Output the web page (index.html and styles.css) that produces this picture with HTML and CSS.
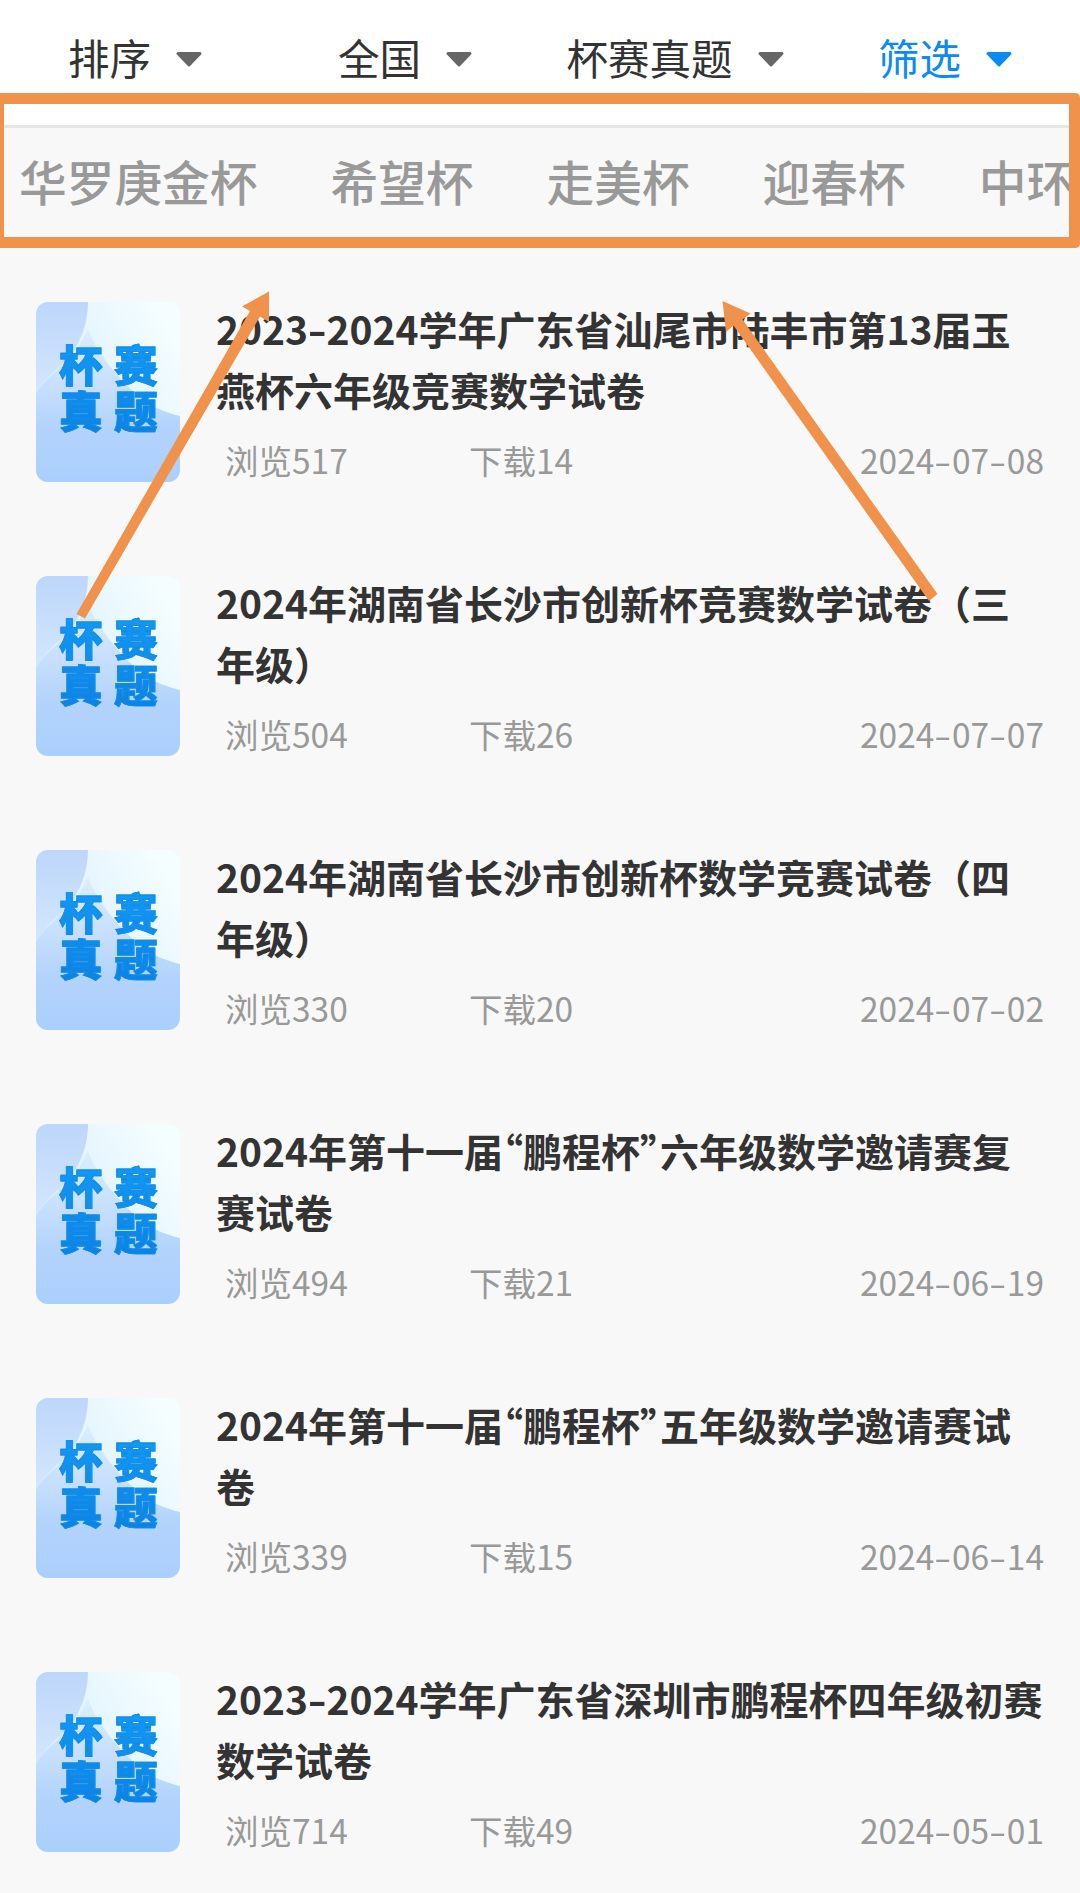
FILE: index.html
```html
<!DOCTYPE html>
<html lang="zh-CN">
<head>
  <meta charset="UTF-8">
  <title>杯赛真题</title>
  <link rel="stylesheet" href="styles.css">
</head>
<body>
  <svg class="defs" width="0" height="0">
    <defs>
      <linearGradient id="sky" x1="0" y1="0.6" x2="0.8" y2="0">
        <stop offset="0" stop-color="#cbe4fd"/>
        <stop offset="0.5" stop-color="#e4f5fe"/>
        <stop offset="1" stop-color="#f4fdff"/>
      </linearGradient>
      <linearGradient id="corner" x1="0" y1="0" x2="0" y2="1">
        <stop offset="0" stop-color="#bdd6fa"/>
        <stop offset="1" stop-color="#d3e7fd"/>
      </linearGradient>
      <linearGradient id="hill" x1="0" y1="0" x2="0" y2="1">
        <stop offset="0" stop-color="#dceefe"/>
        <stop offset="0.35" stop-color="#c8e0fd"/>
        <stop offset="0.65" stop-color="#b2d3fc"/>
        <stop offset="1" stop-color="#abcffd"/>
      </linearGradient>
    </defs>
    <symbol id="cover" viewBox="0 0 144 180">
      <rect width="144" height="180" fill="url(#sky)"/>
      <path d="M0 0H52C52 18 47 32 40 45C30 64 12 68 0 92Z" fill="url(#corner)"/>
      <path d="M0 92C12 72 34 62 42 46L52 27C60 50 82 76 100 92C112 104 128 110 144 114V180H0Z" fill="url(#hill)"/>
    </symbol>
    <symbol id="caret" viewBox="0 0 26 15">
      <path d="M2 1.5H24L13 13Z" fill="currentColor" stroke="currentColor" stroke-width="3" stroke-linejoin="round"/>
    </symbol>
  </svg>

  <div class="page">
    <nav class="filters">
      <div class="filter"><span>排序</span><svg><use href="#caret"/></svg></div>
      <div class="filter"><span>全国</span><svg><use href="#caret"/></svg></div>
      <div class="filter"><span>杯赛真题</span><svg><use href="#caret"/></svg></div>
      <div class="filter active"><span>筛选</span><svg><use href="#caret"/></svg></div>
    </nav>

    <div class="tabs">
      <span>华罗庚金杯</span>
      <span>希望杯</span>
      <span>走美杯</span>
      <span>迎春杯</span>
      <span>中环</span>
    </div>

    <ul class="list">
      <li class="item">
        <div class="thumb"><svg><use href="#cover"/></svg><p>杯赛<br>真题</p></div>
        <div class="info">
          <h3>2023<i>-</i>2024学年广东省汕尾市陆丰市第13届玉<br>燕杯六年级竞赛数学试卷</h3>
          <div class="meta"><span class="views">浏览517</span><span>下载14</span><span class="date">2024<i>-</i>07<i>-</i>08</span></div>
        </div>
      </li>
      <li class="item">
        <div class="thumb"><svg><use href="#cover"/></svg><p>杯赛<br>真题</p></div>
        <div class="info">
          <h3>2024年湖南省长沙市创新杯竞赛数学试卷（三<br>年级）</h3>
          <div class="meta"><span class="views">浏览504</span><span>下载26</span><span class="date">2024<i>-</i>07<i>-</i>07</span></div>
        </div>
      </li>
      <li class="item">
        <div class="thumb"><svg><use href="#cover"/></svg><p>杯赛<br>真题</p></div>
        <div class="info">
          <h3>2024年湖南省长沙市创新杯数学竞赛试卷（四<br>年级）</h3>
          <div class="meta"><span class="views">浏览330</span><span>下载20</span><span class="date">2024<i>-</i>07<i>-</i>02</span></div>
        </div>
      </li>
      <li class="item">
        <div class="thumb"><svg><use href="#cover"/></svg><p>杯赛<br>真题</p></div>
        <div class="info">
          <h3>2024年第十一届<span class="lq">“</span>鹏程杯<span class="rq">”</span>六年级数学邀请赛复<br>赛试卷</h3>
          <div class="meta"><span class="views">浏览494</span><span>下载21</span><span class="date">2024<i>-</i>06<i>-</i>19</span></div>
        </div>
      </li>
      <li class="item">
        <div class="thumb"><svg><use href="#cover"/></svg><p>杯赛<br>真题</p></div>
        <div class="info">
          <h3>2024年第十一届<span class="lq">“</span>鹏程杯<span class="rq">”</span>五年级数学邀请赛试<br>卷</h3>
          <div class="meta"><span class="views">浏览339</span><span>下载15</span><span class="date">2024<i>-</i>06<i>-</i>14</span></div>
        </div>
      </li>
      <li class="item">
        <div class="thumb"><svg><use href="#cover"/></svg><p>杯赛<br>真题</p></div>
        <div class="info">
          <h3>2023<i>-</i>2024学年广东省深圳市鹏程杯四年级初赛<br>数学试卷</h3>
          <div class="meta"><span class="views">浏览714</span><span>下载49</span><span class="date">2024<i>-</i>05<i>-</i>01</span></div>
        </div>
      </li>
    </ul>

    <!-- highlight box and arrows -->
    <svg class="marks" viewBox="0 0 1080 1893">
      <path fill-rule="evenodd" d="M0 93H1075Q1080 93 1080 98V243Q1080 248 1075 248H0ZM4 104V237H1069V104Z"/>
      <path d="M269 291.5L242 306.5L250 311L76.5 614L85 618.5L260 316.5L269 322Z"/>
      <path d="M722.5 301L750.5 313.5L742.5 319.5L937.5 594L929 601L733.5 325.5L726 332Z"/>
    </svg>
  </div>
</body>
</html>
```
FILE: styles.css
```css
:root {
  --blue: #0a8af5;
  --orange: #f0924b;
  --text: #333333;
  --text-light: #999999;
}

* {
  box-sizing: border-box;
}

body {
  margin: 0;
  font-family: "Noto Sans CJK SC", sans-serif;
  background-color: #f8f8f8;
  color: var(--text);
}

.defs {
  position: absolute;
}

.page {
  position: relative;
  width: 1080px;
  height: 1893px;
  overflow: hidden;
}

.filters {
  display: grid;
  grid-template-columns: repeat(4, 1fr);
  height: 128px;
  padding-bottom: 7px;
  background-color: #fff;
  border-bottom: 3px solid #e6e6e4;
}

.filter {
  display: flex;
  justify-content: center;
  align-items: center;
  gap: 25px;
  font-size: 41.5px;
  white-space: nowrap;
}

.filter span {
  padding-bottom: 4px;
}

.filter svg {
  width: 26px;
  height: 15px;
  color: #666;
}

.filter.active,
.filter.active svg {
  color: var(--blue);
}

.tabs {
  display: flex;
  align-items: center;
  gap: 73px;
  height: 109px;
  padding: 0 0 5px 19px;
  overflow: hidden;
  white-space: nowrap;
  font-size: 47.7px;
  font-weight: 500;
  color: var(--text-light);
}

.tabs span {
  flex-shrink: 0;
}

.list {
  list-style: none;
  margin: 0;
  padding: 61px 36px 0;
}

.item {
  display: flex;
  gap: 36px;
  height: 274px;
}

.thumb {
  display: grid;
  flex-shrink: 0;
  width: 144px;
  height: 180px;
  margin-top: 4px;
  border-radius: 12px;
  overflow: hidden;
}

.thumb svg,
.thumb p {
  grid-area: 1 / 1;
}

.thumb svg {
  width: 144px;
  height: 180px;
}

.thumb p {
  margin: 0;
  padding: 39px 0 0 23px;
  font-size: 43.5px;
  font-weight: 900;
  line-height: 46px;
  letter-spacing: 11.5px;
  white-space: nowrap;
  color: transparent;
  background: linear-gradient(#1297f2 25%, #0c82e3 75%);
  background-clip: text;
  -webkit-text-stroke: 0.8px #0f8ceb;
}

.info {
  flex: 1;
}

h3 {
  margin: 0;
  font-size: 39px;
  font-weight: 700;
  line-height: 61px;
  white-space: nowrap;
}

h3 i,
.date i {
  display: inline-block;
  margin: 0 2px;
  font-style: normal;
  transform: scaleX(1.35);
}

.date i {
  margin: 0 3px;
  transform: scaleX(1.5);
}

/* trim the empty half of the full-width quotes */
.lq {
  margin-left: -19px;
}

.rq {
  margin-right: -19px;
}

.meta {
  display: flex;
  align-items: center;
  height: 48px;
  margin-top: 15px;
  padding-left: 9px;
  font-size: 33.5px;
  color: var(--text-light);
}

.views {
  width: 244px;
}

.date {
  margin-left: auto;
}

.marks {
  position: absolute;
  top: 0;
  left: 0;
  width: 1080px;
  height: 1893px;
  fill: var(--orange);
}
```
